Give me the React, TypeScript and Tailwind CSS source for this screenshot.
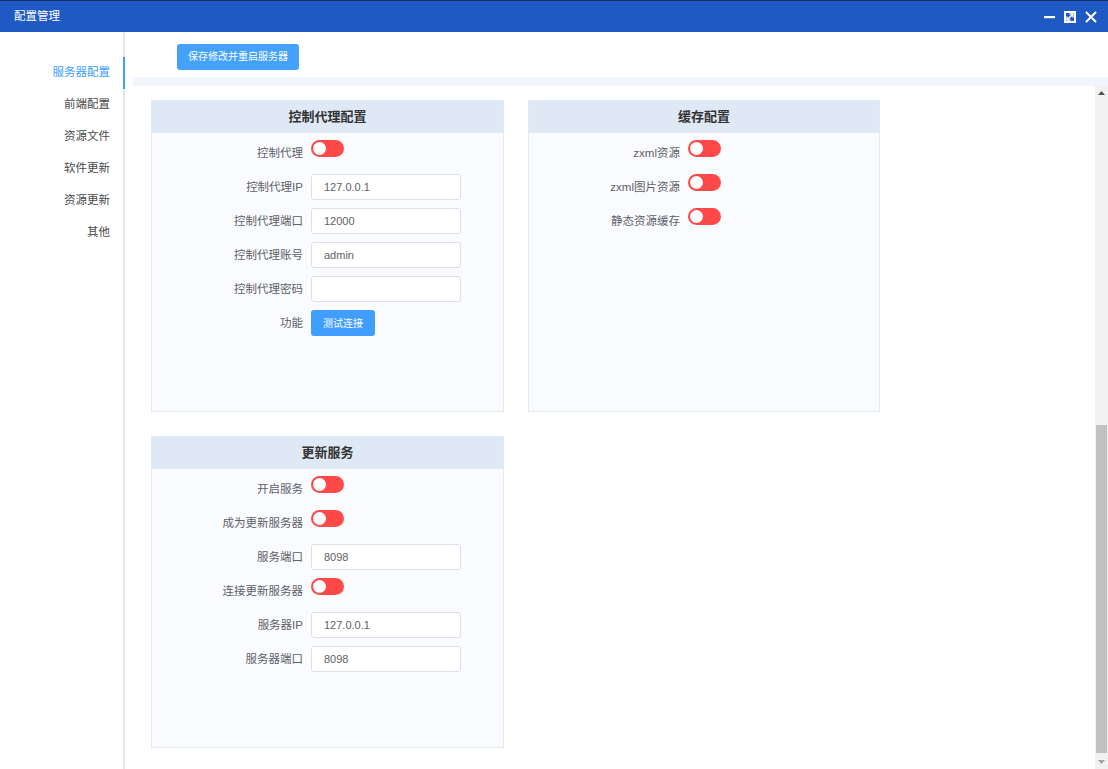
import React from 'react';

type Row =
  | { kind: 'switch'; label: string }
  | { kind: 'input'; label: string; value: string }
  | { kind: 'button'; label: string; text: string };

const NAV = ['服务器配置', '前端配置', '资源文件', '软件更新', '资源更新', '其他'];

const PROXY: Row[] = [
  { kind: 'switch', label: '控制代理' },
  { kind: 'input', label: '控制代理IP', value: '127.0.0.1' },
  { kind: 'input', label: '控制代理端口', value: '12000' },
  { kind: 'input', label: '控制代理账号', value: 'admin' },
  { kind: 'input', label: '控制代理密码', value: '' },
  { kind: 'button', label: '功能', text: '测试连接' },
];

const CACHE: Row[] = [
  { kind: 'switch', label: 'zxml资源' },
  { kind: 'switch', label: 'zxml图片资源' },
  { kind: 'switch', label: '静态资源缓存' },
];

const UPDATE: Row[] = [
  { kind: 'switch', label: '开启服务' },
  { kind: 'switch', label: '成为更新服务器' },
  { kind: 'input', label: '服务端口', value: '8098' },
  { kind: 'switch', label: '连接更新服务器' },
  { kind: 'input', label: '服务器IP', value: '127.0.0.1' },
  { kind: 'input', label: '服务器端口', value: '8098' },
];

function Toggle() {
  return (
    <div className="w-[33px] h-[17px] rounded-full bg-[#ff4949] flex items-center pl-[2px]">
      <div className="w-[13px] h-[13px] rounded-full bg-white" />
    </div>
  );
}

function FormRow({ row }: { row: Row }) {
  return (
    <div className="flex h-[26px]">
      <div className="w-[159px] pr-2 text-right leading-[26px] text-[11.5px] text-[#5e6168] whitespace-nowrap">
        {row.label}
      </div>
      {row.kind === 'switch' && <Toggle />}
      {row.kind === 'input' && (
        <div className="w-[150px] h-[26px] rounded-[3px] border border-[#dcdfe6] bg-white px-3 flex items-center text-[11px] text-[#606266]">
          {row.value}
        </div>
      )}
      {row.kind === 'button' && (
        <button className="w-[64px] h-[26px] rounded-[3px] bg-[#409eff] text-white text-[10px]">
          {row.text}
        </button>
      )}
    </div>
  );
}

function Card({ title, rows }: { title: string; rows: Row[] }) {
  return (
    <div className="h-[312px] border border-[#e4eaf2] bg-[#f9fbfe] flex flex-col">
      <div className="h-[32px] bg-[#dfe9f5] flex items-center justify-center text-[13px] font-bold text-[#333]">
        {title}
      </div>
      <div className="pt-[7px] flex flex-col gap-[8px]">
        {rows.map((r, i) => (
          <FormRow key={i} row={r} />
        ))}
      </div>
    </div>
  );
}

export default function App() {
  return (
    <div
      className="w-[1108px] h-[769px] flex flex-col overflow-hidden bg-white"
      style={{ fontFamily: '"Liberation Sans", "Noto Sans CJK SC", sans-serif' }}
    >
      {/* title bar */}
      <div className="h-[32px] shrink-0 bg-[#1f59c4] border-t border-[#18305f] flex items-center pl-[14px] pr-[11px]">
        <span className="text-white text-[11.5px]">配置管理</span>
        <div className="ml-auto flex items-center gap-[9px]">
          <svg width="11" height="12" viewBox="0 0 11 12">
            <rect x="0" y="5" width="11" height="2.2" fill="white" />
          </svg>
          <svg width="12" height="12" viewBox="0 0 12 12">
            <rect x="0" y="0" width="12" height="12" fill="white" />
            <rect x="2" y="2" width="8" height="8" fill="#1f59c4" />
            <path d="M3 9 L9 3" stroke="white" strokeWidth="1.6" />
            <path d="M5.5 3 H9 V6.5" stroke="white" strokeWidth="1.4" fill="none" />
            <path d="M3 5.5 V9 H6.5" stroke="white" strokeWidth="1.4" fill="none" />
          </svg>
          <svg width="12" height="12" viewBox="0 0 12 12">
            <path d="M1 1 L11 11 M11 1 L1 11" stroke="white" strokeWidth="2" />
          </svg>
        </div>
      </div>

      <div className="flex flex-1 min-h-0">
        {/* sidebar */}
        <div className="w-[125px] shrink-0 border-r-2 border-[#e4e7ed] pt-[25px] flex flex-col">
          {NAV.map((n, i) => (
            <div
              key={n}
              className={
                i === 0
                  ? 'h-[32px] -mr-[2px] border-r-2 border-[#409eff] pr-[13px] flex items-center justify-end text-[11.5px] text-[#409eff]'
                  : 'h-[32px] pr-[13px] flex items-center justify-end text-[11.5px] text-[#4a4a4a]'
              }
            >
              {n}
            </div>
          ))}
        </div>

        {/* main */}
        <div className="flex-1 flex flex-col min-w-0 pl-2">
          <div className="pt-[11px] pl-[44px] h-[45px] shrink-0">
            <button className="w-[122px] h-[26px] rounded-[3px] bg-[#44a2fd] text-white text-[10px]">
              保存修改并重启服务器
            </button>
          </div>
          <div className="h-[9px] shrink-0 bg-[#f0f6fc]" />
          <div className="flex flex-1 min-h-0">
            <div className="flex-1 pl-[18px] pt-[14px]">
              <div className="grid grid-cols-[353px_352px] gap-x-[24px] gap-y-[24px]">
                <Card title="控制代理配置" rows={PROXY} />
                <Card title="缓存配置" rows={CACHE} />
                <Card title="更新服务" rows={UPDATE} />
              </div>
            </div>
            {/* scrollbar */}
            <div className="w-[13px] shrink-0 bg-[#f1f1f1] flex flex-col items-center">
              <div className="h-[14px] flex items-center justify-center">
                <svg width="7" height="4" viewBox="0 0 7 4">
                  <path d="M0 4 L3.5 0 L7 4 Z" fill="#505050" />
                </svg>
              </div>
              <div className="h-[325px]" />
              <div className="w-[11px] h-[328px] bg-[#c1c1c1]" />
              <div className="flex-1" />
              <div className="h-[14px] flex items-center justify-center">
                <svg width="7" height="4" viewBox="0 0 7 4">
                  <path d="M0 0 L3.5 4 L7 0 Z" fill="#a3a3a3" />
                </svg>
              </div>
            </div>
          </div>
        </div>
      </div>
    </div>
  );
}
